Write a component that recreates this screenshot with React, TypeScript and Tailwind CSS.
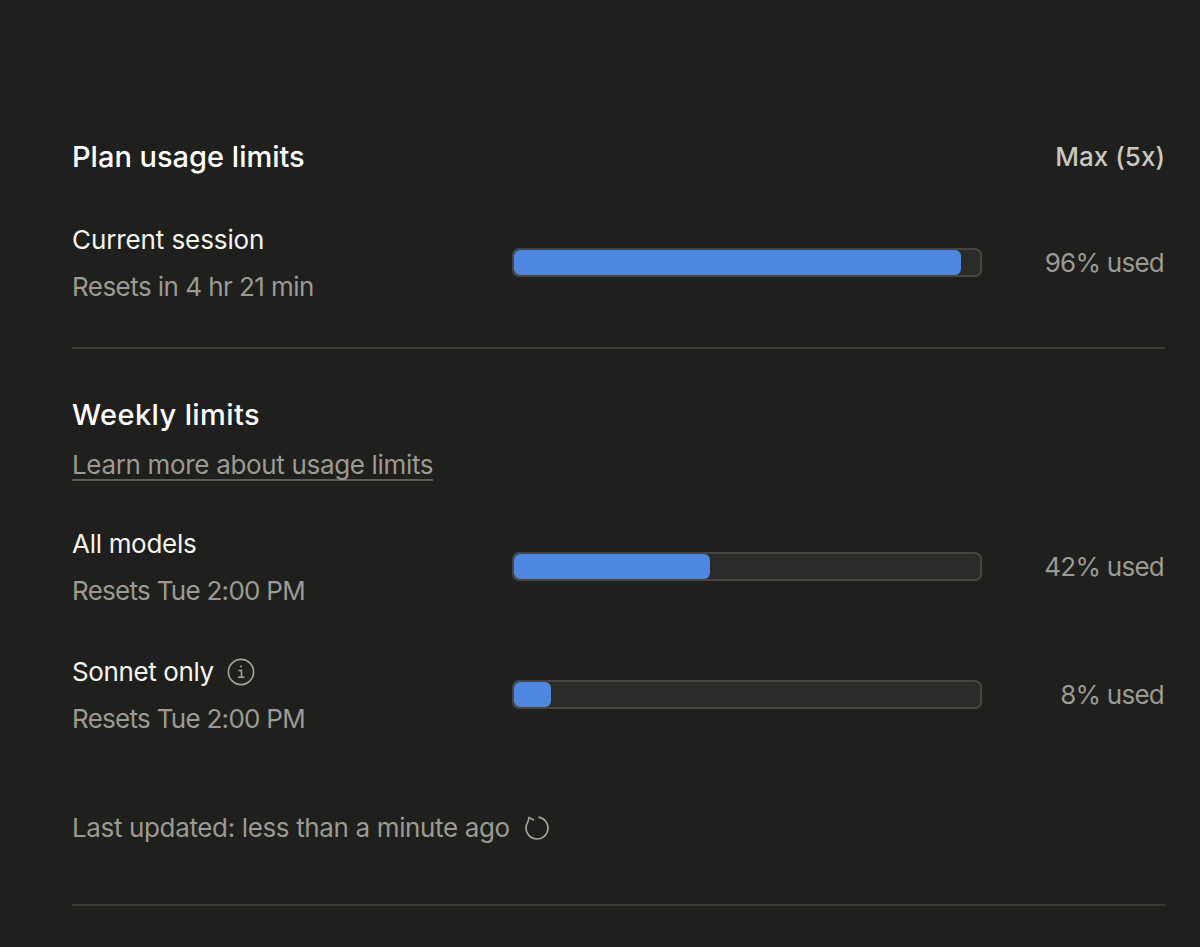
function UsageRow({ label, resets, pct, info, labelClass, resetsClass }: { label: string; resets: string; pct: number; info?: boolean; labelClass: string; resetsClass: string }) {
  return (
    <div className="flex items-center h-[79px]">
      <div className="w-[440px] shrink-0">
        <div className={`flex items-center gap-[13px] h-[32px] text-[26px] leading-[32px] text-[#f5f4ef] ${labelClass}`}>
          {label}
          {info && (
            <svg width="28" height="28" viewBox="0 0 28 28" fill="none" stroke="#a6a39b" strokeWidth="1.6">
              <circle cx="14" cy="14" r="12.6" />
              <path d="M11.5 12.5h3v6.5M11 19.2h6.5" />
              <circle cx="14" cy="8.6" r="1" fill="#a6a39b" stroke="none" />
            </svg>
          )}
        </div>
        <div className={`mt-[15px] h-[32px] text-[26px] leading-[32px] text-[#9c9a92] ${resetsClass}`}>{resets}</div>
      </div>
      <div className="w-[470px] h-[29px] mb-[2px] rounded-[7px] border-2 border-[#46463f] bg-[#2b2b29] overflow-hidden">
        <div className="h-full rounded-[6px] bg-[#4f86e0]" style={{ width: `${pct}%` }} />
      </div>
      <div className="flex-1 mb-[2px] pr-[1px] text-right text-[26px] leading-[32px] tracking-[-0.75px] text-[#9c9a92]">{pct}% used</div>
    </div>
  )
}

export default function App() {
  return (
    <div className="w-[1200px] h-[947px] overflow-hidden bg-[#1f1f1d] pl-[72px] pr-[35px] pt-[138px] font-['Inter',sans-serif]">
      <div className="flex justify-between items-center h-[38px]">
        <h2 className="text-[29px] font-medium text-white">Plan usage limits</h2>
        <span className="mb-[2px] text-[26px] font-medium text-[#c9c7bf]">Max (5x)</span>
      </div>
      <div className="mt-[48px]">
        <UsageRow label="Current session" resets="Resets in 4 hr 21 min" pct={96} labelClass="tracking-[-0.1px]" resetsClass="tracking-[-0.55px]" />
      </div>
      <div className="mt-[44px] border-t-2 border-[#3a3a37]" />
      <h2 className="mt-[47px] h-[38px] text-[29px] leading-[38px] font-medium tracking-[0.4px] text-white">Weekly limits</h2>
      <a className="inline-block mt-[16px] text-[26px] leading-[29px] tracking-[-0.33px] text-[#9c9a92] border-b-2 border-[#5f5e58]">
        Learn more about usage limits
      </a>
      <div className="mt-[47px] flex flex-col gap-[49px]">
        <UsageRow label="All models" resets="Resets Tue 2:00 PM" pct={42} labelClass="tracking-[-0.3px]" resetsClass="tracking-[-0.72px]" />
        <UsageRow label="Sonnet only" resets="Resets Tue 2:00 PM" pct={8} info labelClass="tracking-[-0.38px]" resetsClass="tracking-[-0.72px]" />
      </div>
      <div className="mt-[77px] flex items-center gap-[14px] text-[26px] leading-[32px] tracking-[-0.36px] text-[#9c9a92]">
        Last updated: less than a minute ago
        <svg width="26" height="26" viewBox="0 0 26 26" fill="none" stroke="#a6a39b" strokeWidth="1.6">
          <path d="M14.5 2.1A11 11 0 1 1 2 13C2 10.5 2.6 9 3.5 7.8L5.2 2.4L10 5.2" />
        </svg>
      </div>
      <div className="mt-[60px] border-t-2 border-[#3a3a37]" />
    </div>
  )
}
